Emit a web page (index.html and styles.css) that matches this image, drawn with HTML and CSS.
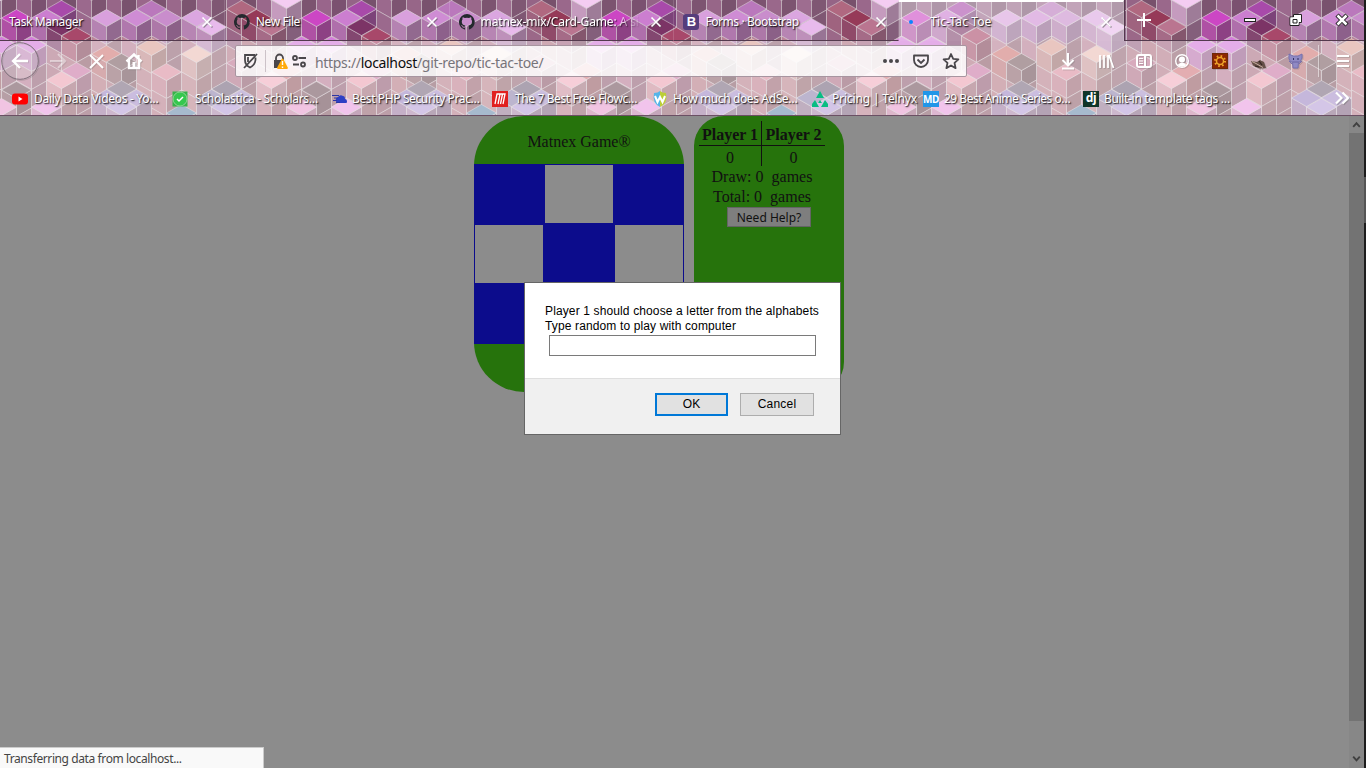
FILE: index.html
```html
<!DOCTYPE html>
<html lang="en">
<head>
<meta charset="utf-8">
<title>Tic-Tac Toe</title>
<link rel="stylesheet" href="styles.css">
</head>
<body>
<div class="window">
<header class="chrome">
  <svg class="theme" id="theme" width="1364" height="116" aria-hidden="true"></svg>
  <div class="tabs">
    <div class="tab first"><span class="label">Task Manager</span><svg class="x" viewBox="0 0 12 12"><path d="M1.500 1.500l9 9M10.500 1.500l-9 9"/></svg></div>
    <div class="tab"><svg class="fav" viewBox="0 0 16 16"><path fill="#24292e" d="M8 0a8 8 0 0 0-2.500 15.600c.4.1.5-.2.5-.4v-1.500c-2 .4-2.600-.5-2.800-1-.1-.2-.5-.9-.8-1.100-.3-.2-.7-.5 0-.6.6 0 1.100.6 1.200.8.7 1.200 1.900.9 2.300.7.1-.5.300-.9.500-1.100-1.800-.2-3.600-.9-3.600-3.900 0-.9.3-1.600.8-2.200-.1-.2-.4-1 .1-2.100 0 0 .7-.2 2.200.8a7.400 7.400 0 0 1 4 0c1.500-1 2.200-.8 2.200-.8.5 1.100.2 1.900.1 2.100.5.6.8 1.300.8 2.200 0 3.100-1.900 3.700-3.600 3.900.3.300.5.7.5 1.500v2.200c0 .2.100.5.6.4A8 8 0 0 0 8 0z"/></svg><span class="label">New File</span><svg class="x" viewBox="0 0 12 12"><path d="M1.500 1.500l9 9M10.500 1.500l-9 9"/></svg></div>
    <div class="tab"><svg class="fav" viewBox="0 0 16 16"><path fill="#24292e" d="M8 0a8 8 0 0 0-2.500 15.600c.4.1.5-.2.5-.4v-1.500c-2 .4-2.600-.5-2.800-1-.1-.2-.5-.9-.8-1.100-.3-.2-.7-.5 0-.6.6 0 1.100.6 1.200.8.7 1.200 1.900.9 2.300.7.1-.5.300-.9.500-1.100-1.800-.2-3.600-.9-3.600-3.900 0-.9.3-1.600.8-2.200-.1-.2-.4-1 .1-2.100 0 0 .7-.2 2.200.8a7.400 7.400 0 0 1 4 0c1.500-1 2.200-.8 2.200-.8.5 1.100.2 1.900.1 2.100.5.6.8 1.300.8 2.200 0 3.100-1.900 3.700-3.600 3.900.3.300.5.7.5 1.500v2.200c0 .2.100.5.6.4A8 8 0 0 0 8 0z"/></svg><span class="label fade">matnex-mix/Card-Game: A si</span><svg class="x" viewBox="0 0 12 12"><path d="M1.500 1.500l9 9M10.500 1.500l-9 9"/></svg></div>
    <div class="tab"><span class="fav boot">B</span><span class="label tight">Forms · Bootstrap</span><svg class="x" viewBox="0 0 12 12"><path d="M1.500 1.500l9 9M10.500 1.500l-9 9"/></svg></div>
    <div class="tab active"><span class="fav"><i class="dot"></i></span><span class="label wide">Tic-Tac Toe</span><svg class="x" viewBox="0 0 12 12"><path d="M1.500 1.500l9 9M10.500 1.500l-9 9"/></svg></div>
    <div class="winctl">
      <svg width="239" height="40" viewBox="0 0 239 40" fill="none">
        <path d="M12 20h14M19 13v14" stroke="#fff" stroke-width="2"/>
        <rect x="119.500" y="18.500" width="11" height="3" fill="#fff" stroke="#222"/>
        <path d="M168.500 14.500h8v8h-2.500v3h-9v-8.500h3.500z" fill="#fff" stroke="#222"/><path d="M166.500 18.500h6v5h-6z" stroke="#fff" stroke-width="2"/><path d="M168 19.500h4v3.500h-4z" fill="#fff" stroke="#222"/>
        <path d="M212 15l10 10M222 15l-10 10" stroke="#222" stroke-width="4.500"/><path d="M212.500 15.500l9 9M221.500 15.500l-9 9" stroke="#fff" stroke-width="2.500"/>
      </svg>
    </div>
  </div>
  <div class="toolbar">
    <svg class="nav" width="160" height="40" viewBox="0 0 160 40" fill="none" stroke="#fff" stroke-width="2">
      <circle cx="20" cy="20" r="18.300" fill="#ffffff30" stroke="#80707c" stroke-width="1"/>
      <path d="M28 20H13M20 13l-7 7 7 7" stroke-width="2.300"/>
      <path d="M50 20h14M58 13l7 7-7 7" opacity=".45"/>
      <path d="M90 14l13 13M103 14L90 27"/>
      <path d="M126.500 20.500l7.500-7 7.500 7M129 19v8h10v-8M138.500 14v4" stroke-width="2.400"/><path d="M134 21v5" stroke-width="3"/>
    </svg>
    <div class="urlbar">
      <svg width="72" height="30" viewBox="0 0 72 30" fill="none" stroke="#4a474b" stroke-width="1.800">
        <path d="M19 9H9v5q0 5 5 7.500 5-2.500 5.500-7.500v-2.500M8 22L21 8"/><path d="M12 11v5"/>
        <path d="M29.500 4v22" stroke="#ccc2c8" stroke-width="1"/>
        <path d="M40 14v-2a3.500 3.500 0 0 1 7 0v2"/><rect x="38" y="14" width="10" height="8" fill="#4a474b" stroke="none"/>
        <path d="M46.500 13.500l4.500 8.500h-9z" fill="#ffa90a" stroke="#ffa90a" stroke-linejoin="round"/><path d="M46.500 15v4M46.500 20.500v1.500" stroke="#fff" stroke-width="1.400"/>
        <circle cx="59" cy="12" r="2"/><path d="M62.500 12H70M57 18.500h6"/><circle cx="67" cy="18.500" r="2"/>
      </svg>
      <span class="url">https://<b>localhost</b>/git-repo/tic-tac-toe/</span>
      <svg class="urlend" width="90" height="30" viewBox="0 0 90 30" fill="none" stroke="#4a474b" stroke-width="1.800">
        <g fill="#4a474b" stroke="none"><circle cx="9" cy="15" r="2"/><circle cx="15" cy="15" r="2"/><circle cx="21" cy="15" r="2"/></g>
        <path d="M38 9.500h14v4.500a7 7 0 0 1-14 0z" stroke-linejoin="round"/><path d="M41.500 13.500l3.500 3.500 3.500-3.500"/>
        <path d="M75 8l2.200 4.800 5.200.6-3.900 3.500 1.100 5.200-4.600-2.600-4.600 2.600 1.100-5.200-3.900-3.500 5.200-.6z" stroke-linejoin="round"/>
      </svg>
    </div>
    <svg class="tools" width="304" height="40" viewBox="1060 0 304 40" fill="none" stroke="#fff" stroke-width="2">
      <path d="M1068 12v12M1062.500 19l5.500 5.500 5.500-5.500M1062 27.500h12"/>
      <path d="M1100 14v13M1104 14v13M1108 14v13M1109 14l4.500 13" stroke-width="1.800"/>
      <rect x="1137" y="14" width="14" height="12" rx="2"/><path d="M1145 14v12"/><path d="M1139 17.500h4M1139 20h4M1139 22.500h4" stroke-width="1"/>
      <circle cx="1182" cy="20" r="6.300" stroke-width="1.400"/><circle cx="1182" cy="18.500" r="3" fill="#fff" stroke="none"/><path d="M1177.500 24q4.500-5 9 0-4.500 3.500-9 0z" fill="#fff" stroke="none"/>
      <rect x="1212.500" y="12.500" width="15" height="15" fill="#8c2602" stroke="#6e2908" stroke-width="1"/><circle cx="1220" cy="20" r="3.500" stroke="#efa52a" stroke-width="1.500"/><circle cx="1220" cy="20" r="5" stroke="#efa52a" stroke-width="2" stroke-dasharray="1.600 2.327"/>
      <path d="M1251 20l6 1 3-2 4 2 2 6-6 .5-7-3z" fill="#665048" stroke="none"/><path d="M1252 20.500l4 2 7 4" stroke="#c9aea2" stroke-width="1"/><path d="M1259 20l3 4M1255 25l4 1" stroke="#342622" stroke-width="1.200"/>
      <path d="M1289 13l4 2h5l4-2v4l-2 4h-9l-2-3zM1292.500 21h6l-.5 6h-5zM1289 20l3 3M1302 20l-3 3" fill="#908ac4" stroke="#7670ae" stroke-width="1"/><path d="M1293 18h1M1297.500 18h1" stroke="#303060"/>
      <path d="M1318.500 4v32" stroke="#ffffff80" stroke-width="1"/>
      <path d="M1337 15h12M1337 20h12M1337 25h12"/>
    </svg>
  </div>
  <div class="bookmarks">
    <span class="bm"><svg viewBox="0 0 16 16"><rect y="2.500" width="16" height="11" rx="3" fill="#f00"/><path d="M6.500 5.500v5l4-2.500z" fill="#fff"/></svg><span class="t">Daily Data Videos - Yo…</span></span>
    <span class="bm b2"><svg viewBox="0 0 16 16"><rect x=".5" y=".5" width="15" height="15" fill="#36b34a"/><circle cx="8" cy="8" r="7" fill="#35c84e" stroke="#b1d7b0" stroke-width=".7"/><path d="M5 8l2 2 4-4" stroke="#fff" stroke-width="1.500" fill="none"/></svg><span class="t">Scholastica - Scholars…</span></span>
    <span class="bm c"><svg viewBox="0 0 16 16"><path d="M4 10q-1-3 2-4 2-3 5-1 2 0 2 3 2 0 2 3 0 1-1 1H5q-1-1-1-2z" fill="#2d3fc4"/><path d="M0 4.500h7M2 7h4M1 9.500h4M4 11.500h4" stroke="#2b36a5"/></svg><span class="t">Best PHP Security Prac…</span></span>
    <span class="bm d"><svg viewBox="0 0 16 16"><path d="M0 0h16v16H0z" fill="#e1201f"/><path d="M3 13L5 3h8l-2 10M6 13l2-10M8.500 13l2-10" stroke="#fff" stroke-width="1.300" fill="none"/></svg><span class="t">The 7 Best Free Flowc…</span></span>
    <span class="bm e"><svg viewBox="0 0 16 16"><path d="M2 2q4 0 6-2v16Q0 12 2 2z" fill="#55b5e8"/><path d="M14 2q-4 0-6-2v16q8-4 6-14z" fill="#bccf36"/><path d="M3 5l2.500 6L8 6l2.500 5L13 5" stroke="#fff" stroke-width="2" fill="none"/></svg><span class="t">How much does AdSe…</span></span>
    <span class="bm f"><svg viewBox="0 0 16 16"><path d="M8 0l4 7H4zM3 9l4 7H0v-3zM13 9l3 4v3H9zM8 9l2 3H6z" fill="#08bd83"/></svg><span class="t">Pricing | Telnyx</span></span>
    <span class="bm g"><span class="sq md">MD</span><span class="t">29 Best Anime Series o…</span></span>
    <span class="bm h"><span class="sq dj">dj</span><span class="t">Built-in template tags …</span></span>
    <svg class="more" viewBox="0 0 14 14"><path d="M1 1.500L6.500 7 1 12.500M7.500 1.500L13 7l-5.500 5.500" fill="none" stroke="#fff" stroke-width="2.200"/></svg>
  </div>
</header>
<main class="page">
  <section class="game">
    <h1>Matnex Game®</h1>
    <div class="board"><i></i><i class="o mid"></i><i></i><i class="o"></i><i></i><i class="o"></i><i></i><i class="o mid"></i><i></i></div>
  </section>
  <aside class="score">
    <div class="table"><b>Player 1</b><b>Player 2</b><span>0</span><span>0</span></div>
    <p>Draw: 0 &nbsp;games</p>
    <p>Total: 0 &nbsp;games</p>
    <button class="help">Need Help?</button>
  </aside>
</main>
<div class="scroll"><svg viewBox="0 0 15 18"><path d="M4 11.500l3.500-4 3.500 4"/></svg><div class="thumb"></div><svg viewBox="0 0 15 18"><path d="M4 7l3.500 4L11 7"/></svg></div>
</div>
<div class="edge"></div>
<div class="status">Transferring data from localhost...</div>
<div class="dialog">
  <div class="msg"><span>Player 1 should choose a letter from the alphabets<br>Type random to play with computer</span><input type="text"></div>
  <div class="actions"><button class="ok">OK</button><button>Cancel</button></div>
</div>
<script src="theme.js"></script>
</body>
</html>
```
FILE: theme.js
```js
// Isometric cube wallpaper: [centre x, centre y, colour of the top], repeated every 300px.
var cubes = [
 [1.500,-26,'#a86a98'],[31.500,-26,'#9a5a92'],[61.500,-26,'#7c5078'],[91.500,-26,'#b070a0'],[121.500,-26,'#8a5c7c'],[151.500,-26,'#a06494'],[181.500,-26,'#a06894'],[211.500,-26,'#c28ab4'],[241.500,-26,'#805070'],[271.500,-26,'#a06894'],
 [286.500,0,'#f4ccf2'],[61.500,9,'#a84aaa'],[151.500,9,'#ba78bc'],[241.500,9,'#b06880'],
 [16.500,18,'#cc46c4'],[46.500,18,'#cc7ed0'],[106.500,18,'#d9a0dd'],[136.500,18,'#cf8cd4'],[166.500,18,'#c98dcc'],[196.500,18,'#dba6e0'],[256.500,18,'#963a58'],
 [61.500,27,'#7c3466'],[211.500,27,'#e8baec'],[271.500,27,'#ba7590'],
 [76.500,36,'#a8486a'],
 [1.500,45,'#d47cda'],[31.500,45,'#d47cda'],[151.500,47,'#dca49a'],[196.500,54,'#ecc0b8'],[106.500,54,'#d07c7a'],
 [121.500,62,'#806468'],[241.500,63,'#c07896'],[286.500,71,'#d27c82'],[76.500,71,'#cc7ca8'],[166.500,72,'#dc92a4'],
 [61.500,80,'#eca6b6'],[271.500,80,'#f0b0c0'],[121.500,89,'#807086'],[226.500,89,'#7a6c82'],[16.500,90,'#785a64'],
 [106.500,98,'#a28cc6'],[136.500,98,'#ac96cc'],[211.500,98,'#9488b0'],[241.500,98,'#ac98cc'],
 [46.500,107,'#e8a0e0'],[121.500,107,'#baa4d8'],[226.500,107,'#b8a2d8'],[301.500,107,'#e8a0d0'],[181.500,113,'#7090b0']
];
function shade(hex, f) {
  var n = parseInt(hex.slice(1), 16);
  return 'rgb(' + [n >> 16, n >> 8 & 255, n & 255].map(function (v) { return Math.round(v * f); }) + ')';
}
function face(points, fill) {
  return '<polygon points="' + points.join(' ') + '" fill="' + fill + '"/>';
}
// Blends two hex colours.
function mix(a, b, t) {
  a = parseInt(a.slice(1), 16); b = parseInt(b.slice(1), 16);
  return '#' + [16, 8, 0].map(function (s) {
    var v = Math.round((a >> s & 255) * (1 - t) + (b >> s & 255) * t);
    return (v < 16 ? '0' : '') + v.toString(16);
  }).join('');
}
var art = '';
cubes.sort(function (a, b) { return a[1] - b[1]; });
cubes.forEach(function (c) {
  [-300, 0, 300, 600, 900, 1200].forEach(function (dx) {
    var x = c[0] + dx, y = c[1], h = 8.5, w = 15, k, s, col;
    if (x < -20 || x > 1380) return;
    for (k = 0; k < 5; k++) {
      s = y + k * 18;
      col = mix(c[2], s < 28 ? '#a87298' : '#c88c9c', k ? .85 : .4);
      art += face([[x - w, s], [x, s + h], [x, s + h + 18], [x - w, s + 18]], shade(col, .92));
      art += face([[x, s + h], [x + w, s], [x + w, s + 18], [x, s + h + 18]], shade(col, .74));
    }
    art += face([[x, y - h], [x + w, y], [x, y + h], [x - w, y]], c[2]);
  });
});
document.getElementById('theme').innerHTML =
  '<rect width="1364" height="116" fill="#86607c"/><g stroke="#dcd4d8" stroke-opacity=".6" stroke-width=".9">' + art + '</g>';
```
FILE: styles.css
```css
* { box-sizing: border-box; }
body { margin: 0; width: 1366px; height: 768px; overflow: hidden; display: grid; grid-template-columns: 1364px 2px; background: #8c8c8c; font-family: "Noto Sans", "Open Sans", sans-serif; }
.window { height: 768px; display: grid; grid-template-columns: 1fr 15px; grid-template-rows: 116px 1fr; }
.edge { background: linear-gradient(#1d1d1d 177px, #555 177px, #555 223px, #1d1d1d 223px); }
.chrome { grid-column: 1 / 3; position: relative; overflow: hidden; color: #fff; font-size: 12px; text-shadow: 1px 1px 1px #000a, 1px 1px 2px #0008; }
.theme { position: absolute; left: 0; top: 0; }
.tabs, .toolbar, .bookmarks { position: relative; display: flex; }
.tabs { height: 41px; }
.tab { width: 225px; padding: 3px 11px 0 9px; display: flex; align-items: center; border-bottom: 1px solid #543a4e; border-right: 1px solid #ffffff24; }
.tab.active { background: #ffffff66; border-top: 2px solid #fff; border-bottom: 0; padding-top: 0; }
.label { flex: 1; white-space: nowrap; overflow: hidden; line-height: 20px; letter-spacing: -.4px; }
.label.tight { letter-spacing: -.42px; }
.label.wide { letter-spacing: .1px; }
.fade { letter-spacing: -.12px; margin-right: 8px; -webkit-mask-image: linear-gradient(90deg, #000 80%, transparent); mask-image: linear-gradient(90deg, #000 80%, transparent); }
.x { width: 12px; height: 12px; fill: none; stroke: #fff; stroke-width: 1.7; filter: drop-shadow(1px 1px 0 #5558); }
.fav { width: 16px; height: 16px; margin-right: 6px; flex: none; }
.boot { background: #563d7c; border-radius: 3px; font: bold 13px/16px "Liberation Sans", sans-serif; text-align: center; text-shadow: none; }
.dot { display: block; width: 4px; height: 4px; border-radius: 2px; background: #0a84ff; margin: 6px 0 0 1px; }
.winctl { flex: 1; border-bottom: 1px solid #543a4e; border-left: 1px solid #543a4e; }
.winctl svg { display: block; }
.toolbar { height: 41px; background: #ffffff60; }
.nav { margin-right: 75px; }
.nav, .tools { filter: drop-shadow(1px 1px 0 #6664); }
.urlbar { width: 732px; height: 32px; margin-top: 4px; border: 1px solid #a795a0; border-radius: 2px; background: #ffffffd4; display: flex; text-shadow: none; }
.url { margin-left: 7px; flex: 1; font-size: 14px; line-height: 33px; color: #77747a; letter-spacing: -.32px; }
.url b { color: #0c0c0d; font-weight: 400; }
.tools { margin-left: 93px; }
.bookmarks { height: 34px; padding-left: 12px; background: #ffffff60; border-bottom: 1px solid #6b5064; }
.bm { width: 160px; height: 33px; display: flex; align-items: center; white-space: nowrap; letter-spacing: -.29px; }
.bm svg, .sq { width: 16px; height: 16px; margin-right: 6px; flex: none; }
.bm.b2 svg { margin-right: 7px; }
.bm.f { width: 111px; letter-spacing: -.15px; } .bm.c svg, .bm.f svg { margin-right: 4px; } .bm.d svg { margin-right: 7px; } .bm.e svg { margin-right: 5px; }
.bm.c, .bm.d, .bm.e { letter-spacing: -.38px; }
.bm.g { letter-spacing: -.5px; } .bm.g .sq { margin-right: 5px; }
.bm.h { letter-spacing: -.33px; } .bm.h .sq { margin-right: 5px; }
.sq { font: bold 10px/16px "Noto Sans", sans-serif; text-align: center; text-shadow: none; letter-spacing: -.4px; }
.md { background: #2196e8; } .dj { background: #103528; font-size: 12px; line-height: 14px; }
.more { width: 14px; height: 14px; margin: 9px 15px 0 auto; filter: drop-shadow(1px 1px 0 #6666); }
.page { display: flex; justify-content: center; align-items: flex-start; gap: 10px; padding-right: 31px; font: 16px/20px "Liberation Serif", serif; color: #111; }
.game { width: 210px; height: 276px; border-radius: 50px; background: #26730c; }
h1 { margin: 0; height: 48px; font-size: 16px; font-weight: 400; line-height: 51px; text-align: center; }
.board { height: 180px; display: grid; grid-template-columns: 70px 70px 70px; grid-template-rows: 60px 59px 61px; background: #0c0c8c; }
.board .o { background: #8c8c8c; margin: 1px 1px 0; }
.board .mid { margin: 1px 1px; }
.score { width: 150px; height: 276px; border-radius: 30px; background: #26730c; padding: 5px 0 0 5px; }
.table { display: grid; grid-template-columns: 63px 63px; grid-template-rows: 25px 20px; text-align: center; }
.table b { border-bottom: 1px solid #111; line-height: 27px; }
.table span { line-height: 23px; }
.table > :nth-child(odd) { border-right: 1px solid #111; }
.score p { width: 126px; margin: 0; height: 20px; line-height: 22px; text-align: center; }
.help { display: block; width: 84px; height: 20px; margin: 1px 0 0 28px; padding: 0; border: 1px solid #646464; background: #7e7e7e; color: #111; font: 12px/17px "Noto Sans", sans-serif; }
.scroll { background: #878787; display: flex; flex-direction: column; }
.scroll svg { height: 17px; fill: none; stroke: #404040; stroke-width: 2; }
.thumb { height: 588px; margin-bottom: 29px; background: #737373; }
.status { position: absolute; left: 0; top: 747px; width: 264px; height: 21px; padding-left: 4px; background: #f9f9f9; border: solid #ccc; border-width: 1px 1px 0 0; color: #444; font-size: 12px; line-height: 22px; letter-spacing: -.4px; }
.dialog { position: absolute; left: 524px; top: 282px; width: 317px; height: 153px; border: 1px solid #666; background: #fff; font: 12px/15px "Liberation Sans", sans-serif; color: #000; letter-spacing: .13px; }
.msg { height: 95px; padding: 21px 0 0 20px; white-space: nowrap; }
.msg input { display: block; width: 267px; height: 21px; margin: 1px 0 0 4px; border: 1px solid #7a7a7a; outline: 0; }
.actions { height: 56px; padding: 15px 26px 0 0; border-top: 1px solid #dfdfdf; background: #f0f0f0; display: flex; justify-content: flex-end; gap: 12px; }
.actions button { width: 74px; height: 23px; padding: 0 0 2px; margin-top: -1px; border: 1px solid #adadad; background: #e1e1e1; font: 12px "Liberation Sans", sans-serif; letter-spacing: .2px; color: #000; }
.actions .ok { width: 73px; border: 2px solid #0078d7; }
```
